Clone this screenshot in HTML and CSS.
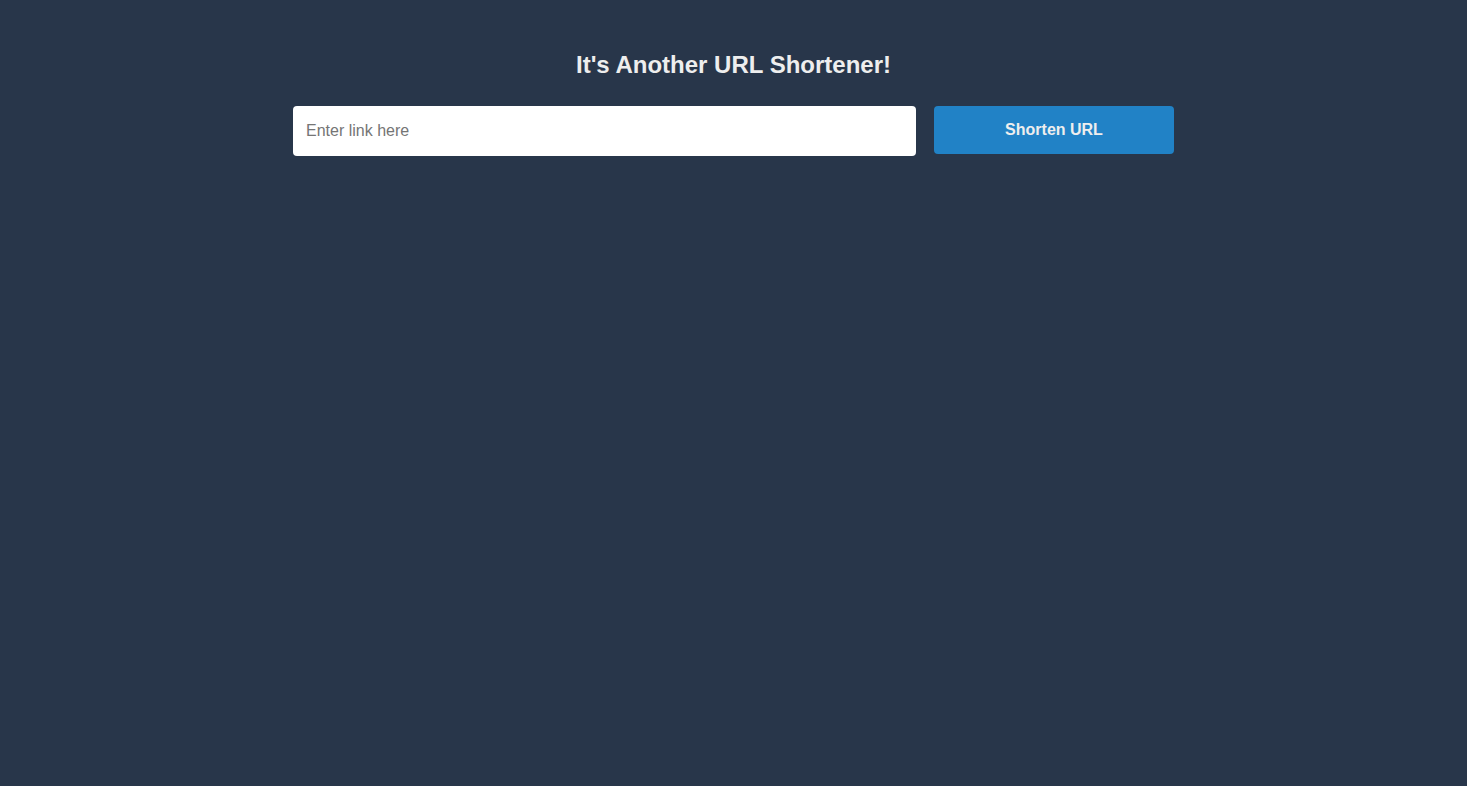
FILE: index.html
```html
<!DOCTYPE html>
<html>
<head>
<meta charset="utf-8">
<title>URL Shortener</title>
<link rel="stylesheet" href="styles.css">
</head>
<body>
<main class="app">
  <h1 class="title">It's Another URL Shortener!</h1>
  <form class="shorten-form">
    <input class="link-input" type="text" placeholder="Enter link here">
    <button class="shorten-btn" type="button">Shorten URL</button>
  </form>
</main>
</body>
</html>
```
FILE: styles.css
```css
html, body {
  margin: 0;
  padding: 0;
  height: 100%;
}
body {
  background: #28364a;
  font-family: "Liberation Sans", Arial, sans-serif;
  color: #eeeeee;
}
.app {
  display: flex;
  flex-direction: column;
  align-items: center;
  padding-top: 51px;
}
.title {
  margin: 0 0 27px;
  font-size: 24px;
  line-height: 28px;
  font-weight: bold;
  color: #eeeeee;
}
.shorten-form {
  display: flex;
  align-items: flex-start;
  gap: 18px;
  width: 881px;
}
.link-input {
  box-sizing: border-box;
  width: 623px;
  height: 50px;
  border: none;
  border-radius: 4px;
  padding: 0 13px;
  font-family: "Liberation Sans", Arial, sans-serif;
  font-size: 16px;
  background: #ffffff;
  color: #333;
  outline: none;
}
.link-input::placeholder {
  color: #757575;
}
.shorten-btn {
  box-sizing: border-box;
  width: 240px;
  height: 48px;
  border: none;
  border-radius: 4px;
  background: #2182c6;
  color: #eeeeee;
  font-family: "Liberation Sans", Arial, sans-serif;
  font-size: 16px;
  font-weight: bold;
  cursor: pointer;
}
```
